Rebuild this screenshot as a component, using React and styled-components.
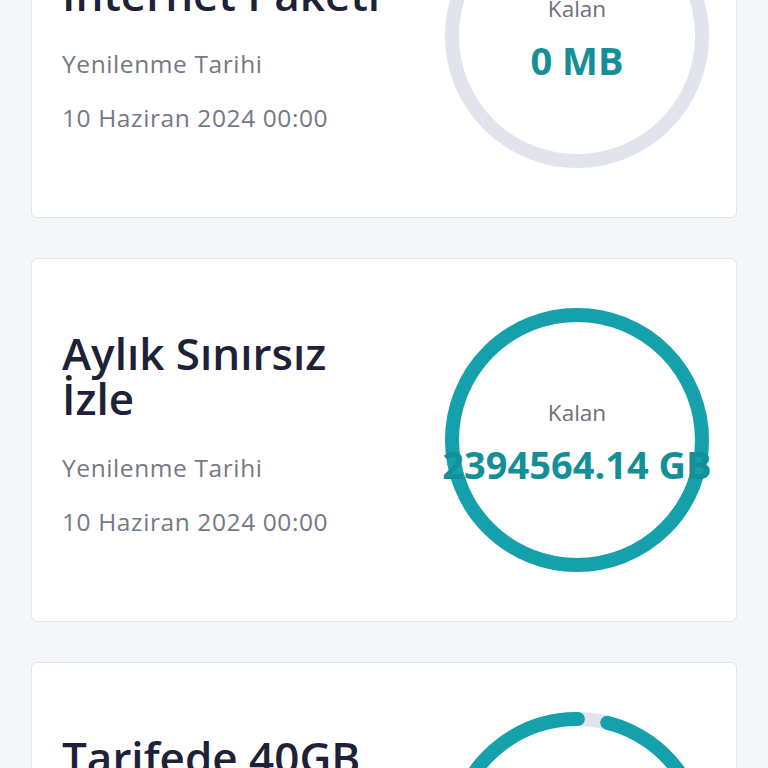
import React from 'react';
import styled, { createGlobalStyle } from 'styled-components';

const GlobalStyle = createGlobalStyle`
  html, body {
    margin: 0;
    padding: 0;
    background: #f5f6f8;
    font-family: 'Open Sans', 'Liberation Sans', sans-serif;
    overflow: hidden;
  }
`;

const Page = styled.div`
  display: flex;
  flex-direction: column;
  gap: 40px;
  padding: 0 31px;
  margin-top: -146px;
`;

const Card = styled.div`
  display: flex;
  align-items: center;
  justify-content: space-between;
  background: #ffffff;
  border: 1px solid #e2e5ea;
  border-radius: 6px;
  padding: 49px 27px 49px 30px;
`;

const Info = styled.div`
  display: flex;
  flex-direction: column;
`;

const Title = styled.h2`
  margin: 0 0 20px;
  max-width: 340px;
  font-size: 44px;
  line-height: 45px;
  font-weight: 600;
  color: #1d2239;
`;

const Meta = styled.div`
  font-size: 24.5px;
  line-height: 54px;
  letter-spacing: 0.6px;
  color: #757984;
`;

const RingWrap = styled.div`
  position: relative;
  width: 264px;
  height: 264px;
  flex-shrink: 0;
`;

const RingSvg = styled.svg`
  display: block;
  width: 264px;
  height: 264px;
`;

const RingText = styled.div`
  position: absolute;
  inset: 0;
  display: flex;
  flex-direction: column;
  align-items: center;
  justify-content: center;
  gap: 10px;
  padding-top: 6px;
  white-space: nowrap;
`;

const Label = styled.div`
  font-size: 22.5px;
  color: #6e717b;
`;

const Value = styled.div`
  font-size: 38px;
  font-weight: 700;
  color: #148f98;
`;

const R = 125;
const C = 2 * Math.PI * R;

function Ring({ full, empty, label, value }) {
  // gap of 30px of arc, centred a little right of 12 o'clock
  const len = full ? C : C - 30;
  return (
    <RingWrap>
      <RingSvg viewBox="0 0 264 264">
        <circle cx="132" cy="132" r={R} fill="none" stroke="#e1e4ec" strokeWidth="14" />
        {!empty && (
          <circle
            cx="132"
            cy="132"
            r={R}
            fill="none"
            stroke="#14a1ab"
            strokeWidth="14"
            strokeLinecap={full ? 'butt' : 'round'}
            strokeDasharray={`${len} ${C}`}
            transform={`rotate(${full ? -90 : -76} 132 132)`}
          />
        )}
      </RingSvg>
      <RingText>
        <Label>{label}</Label>
        <Value>{value}</Value>
      </RingText>
    </RingWrap>
  );
}

const packages = [
  { title: 'Sosyal Medya İnternet Paketi', empty: true, value: '0 MB' },
  { title: 'Aylık Sınırsız İzle', full: true, value: '2394564.14 GB' },
  { title: 'Tarifede 40GB İnternet', value: '38.8 GB' },
];

export default function App() {
  return (
    <>
      <GlobalStyle />
      <Page>
        {packages.map((p) => (
          <Card key={p.title}>
            <Info>
              <Title>{p.title}</Title>
              <Meta>Yenilenme Tarihi</Meta>
              <Meta>10 Haziran 2024 00:00</Meta>
            </Info>
            <Ring full={p.full} empty={p.empty} label="Kalan" value={p.value} />
          </Card>
        ))}
      </Page>
    </>
  );
}
